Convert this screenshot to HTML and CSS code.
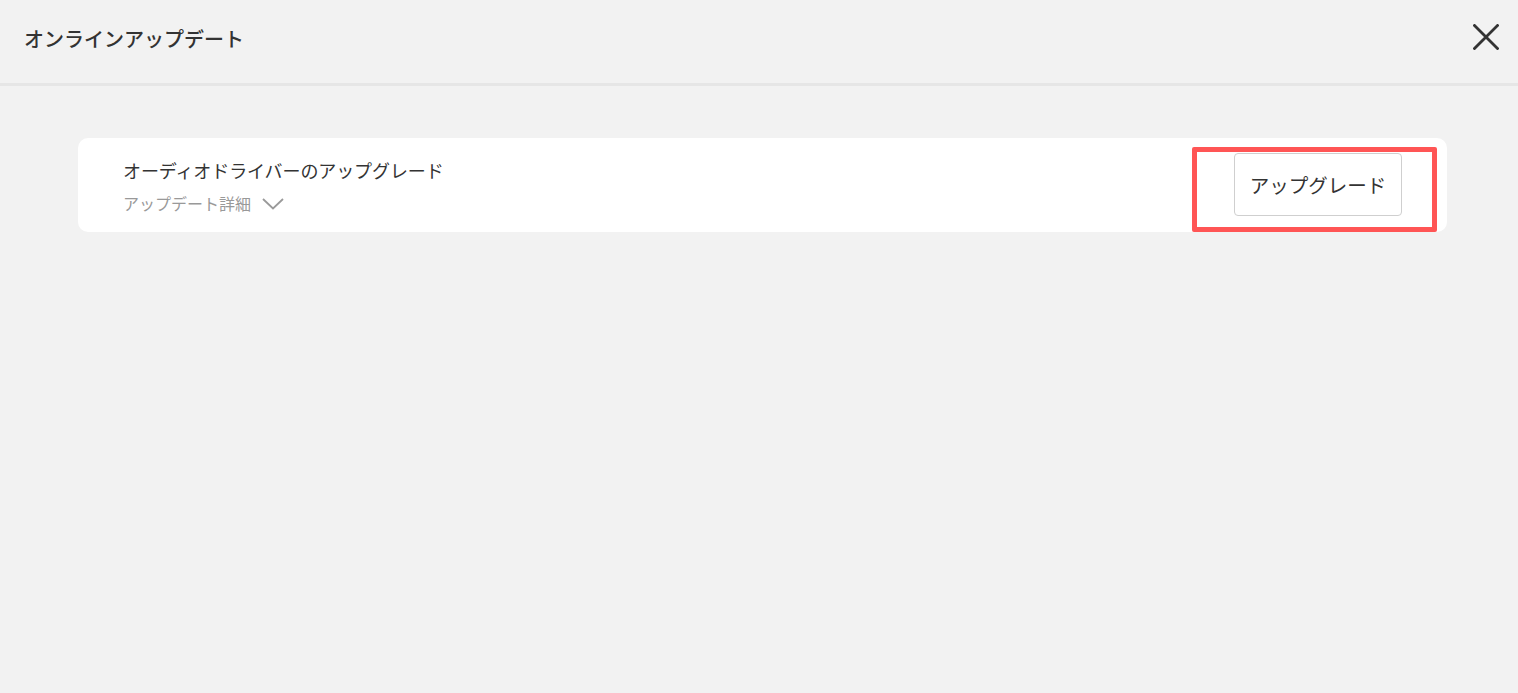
FILE: index.html
```html
<!DOCTYPE html>
<html lang="ja">
<head>
<meta charset="utf-8">
<title>オンラインアップデート</title>
<link rel="stylesheet" href="styles.css">
</head>
<body>
<div class="dialog">
  <header class="header">
    <h1 class="title">オンラインアップデート</h1>
    <button class="close" aria-label="閉じる">
      <svg width="26" height="26" viewBox="0 0 26 26"><path d="M1.5 1.5 L24.5 24.5 M24.5 1.5 L1.5 24.5" stroke="#333" stroke-width="2.8" stroke-linecap="square" fill="none"/></svg>
    </button>
  </header>
  <main class="content">
    <div class="card">
      <div class="info">
        <div class="name">オーディオドライバーのアップグレード</div>
        <div class="details">アップデート詳細
          <svg class="chev" width="22" height="12" viewBox="0 0 22 12"><path d="M1 1 L11 10.5 L21 1" stroke="#9a9a9a" stroke-width="1.8" fill="none"/></svg>
        </div>
      </div>
      <div class="action">
        <button class="upgrade">アップグレード</button>
        <div class="highlight"></div>
      </div>
    </div>
  </main>
</div>
</body>
</html>
```
FILE: styles.css
```css
html, body {
  margin: 0;
  padding: 0;
  background: #f2f2f2;
  font-family: "Noto Sans CJK JP", "Noto Sans", sans-serif;
}
.dialog {
  width: 1518px;
  height: 693px;
  background: #f2f2f2;
}
.header {
  height: 83px;
  border-bottom: 3px solid #e6e6e6;
  display: flex;
  align-items: center;
  justify-content: space-between;
  padding: 0 19px 0 24px;
  box-sizing: content-box;
}
.title {
  margin: 0;
  font-size: 20px;
  font-weight: 500;
  color: #333;
  letter-spacing: 0;
  position: relative;
  top: -3px;
}
.close {
  border: 0;
  background: none;
  padding: 0;
  width: 26px;
  height: 26px;
  display: flex;
  position: relative;
  top: -5px;
}
.content {
  padding: 52px 71px 0 78px;
}
.card {
  background: #fff;
  border-radius: 10px;
  height: 94px;
  display: flex;
  align-items: stretch;
  justify-content: space-between;
}
.info {
  padding: 18px 0 0 45px;
}
.name {
  font-size: 18px;
  color: #333;
  line-height: 28px;
  letter-spacing: -0.1px;
}
.details {
  font-size: 16px;
  color: #999;
  line-height: 24px;
  margin-top: 7px;
  display: flex;
  align-items: center;
  gap: 11px;
}
.chev {
  margin-top: 1px;
}
.action {
  position: relative;
  width: 254px;
  display: flex;
  align-items: flex-start;
  padding: 15px 0 0 41px;
  box-sizing: border-box;
}
.upgrade {
  width: 168px;
  height: 63px;
  background: #fff;
  border: 1.5px solid #cfcfcf;
  border-radius: 4px;
  font-family: "Noto Sans CJK JP", "Noto Sans", sans-serif;
  font-size: 19.5px;
  color: #333;
  padding: 0;
  cursor: pointer;
}
.highlight {
  position: absolute;
  left: -1px;
  top: 9px;
  width: 245px;
  height: 85px;
  border: 5px solid #ff5555;
  border-radius: 2px;
  box-sizing: border-box;
  pointer-events: none;
}
```
